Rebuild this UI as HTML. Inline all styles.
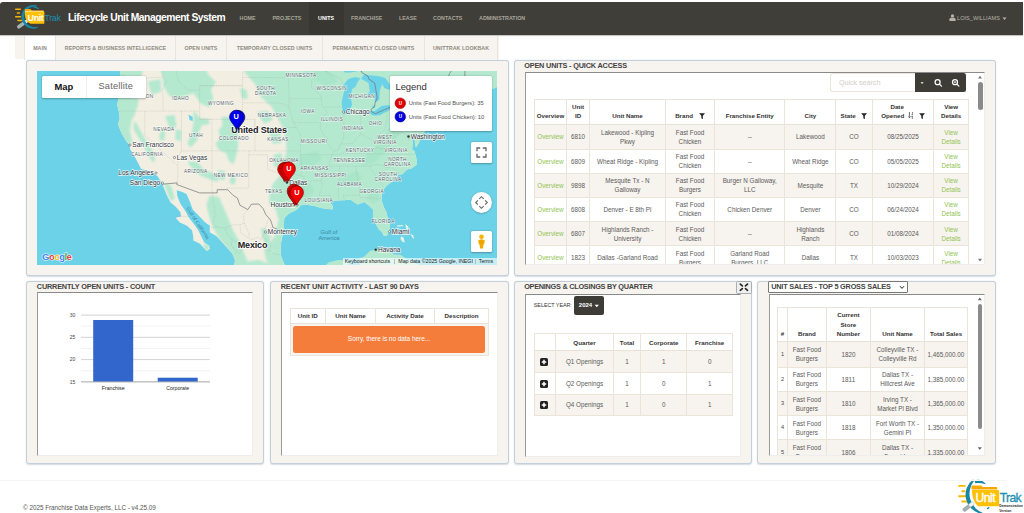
<!DOCTYPE html>
<html><head><meta charset="utf-8">
<style>
*{box-sizing:border-box;margin:0;padding:0}
html,body{width:1024px;height:513px;overflow:hidden;background:#fff;font-family:"Liberation Sans",sans-serif;color:#555}
body{position:relative}
.abs{position:absolute}
#nav{left:0;top:1.6px;width:1022.7px;height:33.8px;background:#3f3e38;border-radius:3px 0 0 0;box-shadow:0 1px 1px rgba(0,0,0,.25)}
#nav .title{left:68px;top:10.4px;font-size:10.3px;font-weight:bold;color:#fff;white-space:nowrap;letter-spacing:-.47px}
#nav .mi{top:13.7px;font-size:5.3px;color:#a9a79c;white-space:nowrap;font-weight:bold;letter-spacing:.05px}
#nav .act{left:309px;top:0;width:35px;height:33.8px;background:#383732}
#tabs{left:15px;top:36px;width:483.5px;height:23px;background:#f7f3ee;border-radius:0 0 0 3px}
.tab{top:36px;height:24px;font-size:5.3px;font-weight:bold;color:#8d8b82;line-height:24px;text-align:center;border-right:1.6px solid #e9e5dd;white-space:nowrap;letter-spacing:.05px}
.tab.on{background:#fff;border-left:1.6px solid #e9e5dd}
.panel{background:#f7f3ee;border:1px solid #c3cfdb;border-radius:3px;box-shadow:0 .5px 1.5px rgba(120,140,160,.3)}
.ptitle{font-size:7.3px;font-weight:bold;color:#444;white-space:nowrap;letter-spacing:-.1px}
.inner{background:#fff;border-top:1px solid #8a8a8a;border-left:1.2px solid #9a9a9a;border-right:1px solid #eee;border-bottom:1px solid #eee;overflow:hidden}
table{border-collapse:collapse;table-layout:fixed;position:absolute;font-size:6.3px;color:#5a5a5a}
td,th{border:1px solid #ebe4d9;text-align:center;vertical-align:middle;padding:0;line-height:9px;overflow:hidden}
th{font-weight:bold;color:#333;vertical-align:bottom;padding-bottom:3.2px;border-bottom:1.5px solid #e9e1d5;font-size:6.2px;line-height:9.1px}
tr.s td{background:#f7f3ee}
.g{color:#92c353}
.mc{background:#fff;border-radius:1.5px;box-shadow:0 .5px 2px rgba(0,0,0,.3)}
.lg{font-size:5.75px;color:#525252;white-space:nowrap;letter-spacing:-.03px}
.at{font-size:5.3px;color:#222;white-space:nowrap;letter-spacing:-.02px}
.fi{display:inline-block;vertical-align:-0.9px;margin-left:5.6px}
</style></head><body>
<!-- NAVBAR -->
<div id="nav" class="abs">
  <div class="act abs"></div>
  <div class="title abs">Lifecycle Unit Management System</div>
  <div class="mi abs" style="left:239.5px">HOME</div>
  <div class="mi abs" style="left:272.5px">PROJECTS</div>
  <div class="mi abs" style="left:318px;color:#fff">UNITS</div>
  <div class="mi abs" style="left:351px">FRANCHISE</div>
  <div class="mi abs" style="left:399px">LEASE</div>
  <div class="mi abs" style="left:433px">CONTACTS</div>
  <div class="mi abs" style="left:479px">ADMINISTRATION</div>
  <div class="mi abs" style="left:957px;font-weight:normal;color:#b5b3a8;font-size:5.55px;top:13.6px">LOIS_WILLIAMS</div>
</div>
<svg class="abs" style="left:14px;top:6px;overflow:visible" width="48" height="24" viewBox="0 0 48 24">
<g stroke="#f7b500" stroke-width="1.5" stroke-linecap="round"><path d="M1.7 3.2H6.3M3.4 6.9H5.4M1.7 10.7H6.5M3.9 14.6H8"/></g>
<path d="M4.8 20.8L12 15.6" stroke="#a4b0b2" stroke-width="3.6" stroke-linecap="round"/>
<path d="M10.3 16.8L12.3 15.3" stroke="#e8eeee" stroke-width="3" stroke-linecap="round"/>
<path d="M22.38 -0.69A11.9 11.9 0 1 0 23.37 21.98L23.65 20.5A10.2 10.2 0 1 1 22.79 0.86Z" fill="#1887a6"/>
<path d="M19.5 .6Q22.5 .3 25.2 2.4L24.6 3.2Q22 1.6 19.5 1.7Z" fill="#1887a6"/>
<path d="M10.9 3.4Q10.9 2.9 11.5 2.9H16.5L18 4.4H29.2Q29.8 4.4 29.8 5V6H10.9Z" fill="#f5a700"/>
<path d="M10.9 5.6H29.6Q30.4 5.6 30.4 6.4V17Q30.4 17.8 29.6 17.8H16.5C13 15.8 11 13 10.9 9Z" fill="#ffc107"/>
<path d="M10.9 5.3H29.5" stroke="#fff3c4" stroke-width=".7"/>
<text x="13.6" y="14.8" style="font:bold 9px 'Liberation Sans',sans-serif;fill:#fff;letter-spacing:-.45px">Unit</text>
<text x="30.6" y="14.8" style="font:8.9px 'Liberation Sans',sans-serif;fill:#1a8fb0;letter-spacing:-.4px">Trak</text>
</svg>
<svg class="abs" style="left:950px;top:474px" width="74" height="39" viewBox="950 474 74 39">
<g stroke="#f9b800" stroke-width="1.9" stroke-linecap="round"><path d="M959.1 485.9H964.8M962.3 491.2H964.5M959.1 496.2H965.2M962.3 501.5H968"/></g>
<path d="M972.9 479.4A19.5 19.5 0 0 0 980 513.5L984.5 513.5A20.5 20.5 0 0 1 974.3 480.6Z" fill="#1887a6"/>
<path d="M974.4 480.4Q981 477.8 986 484.2Q980 482.6 975.4 483.2Z" fill="#1887a6"/>
<ellipse cx="988.2" cy="508.2" rx="1.5" ry=".8" transform="rotate(-35 988.2 508.2)" fill="#1887a6"/>
<path d="M964.6 509.6L972.4 503.6" stroke="#a3aeb0" stroke-width="4" stroke-linecap="round"/>
<path d="M970.6 505L972.6 503.4" stroke="#eef2f2" stroke-width="3.2" stroke-linecap="round"/>
<path d="M971.5 486.2Q971.5 485.4 972.3 485.4H981.2L982.8 487H996.4Q997.2 487 997.2 487.8V489.4H971.5Z" fill="#f5a800"/>
<path d="M971.9 489.9H998.2Q999.2 489.9 999.2 490.9V505.2Q999.2 506.2 998.2 506.2H978C974.2 502.5 972 497 971.9 489.9Z" fill="#ffc107"/>
<text x="975.6" y="501.6" style="font:12.2px 'Liberation Sans',sans-serif;fill:#fff;stroke:#fff;stroke-width:.35px;letter-spacing:-.55px">Unit</text>
<text x="999.8" y="501.6" style="font:12.2px 'Liberation Sans',sans-serif;fill:#1a8fb0;stroke:#1a8fb0;stroke-width:.3px;letter-spacing:-.7px">Trak</text>
<text x="999.3" y="507" style="font:bold 3.3px 'Liberation Sans',sans-serif;fill:#222;letter-spacing:.02px">Demonstration</text>
<text x="999.3" y="511.6" style="font:bold 3.3px 'Liberation Sans',sans-serif;fill:#222;letter-spacing:.02px">Version</text>
</svg>
<svg class="abs" style="left:949px;top:13.5px" width="7" height="7" viewBox="0 0 10 10"><circle cx="5" cy="2.7" r="2.4" fill="#b5b3a8"/><path d="M.6 10V7.6Q.6 5.2 3 5.2H7Q9.4 5.2 9.4 7.6V10Z" fill="#b5b3a8"/></svg>
<svg class="abs" style="left:1002px;top:16.6px" width="5" height="4" viewBox="0 0 5 4"><path d="M.5 .6h4L2.5 3Z" fill="#b5b3a8"/></svg>
<!-- TABS -->
<div id="tabs" class="abs"></div>
<div class="tab on abs" style="left:24px;width:32px">MAIN</div>
<div class="tab abs" style="left:56px;width:120px">REPORTS &amp; BUSINESS INTELLIGENCE</div>
<div class="tab abs" style="left:176px;width:51px">OPEN UNITS</div>
<div class="tab abs" style="left:227px;width:96px">TEMPORARY CLOSED UNITS</div>
<div class="tab abs" style="left:323px;width:102px">PERMANENTLY CLOSED UNITS</div>
<div class="tab abs" style="left:425px;width:73px">UNITTRAK LOOKBAK</div>

<!-- PANELS -->
<div class="panel abs" id="p-map" style="left:26px;top:60px;width:483px;height:216.2px"></div>
<!--MAP--><svg class="abs" style="left:37px;top:71px" width="460" height="194" viewBox="0 0 460 194">
<defs><clipPath id="lc"><path d="M79 -15.7 L82.7 -2 L83.3 4.2 L83.3 14.7 L82.7 23.3 L80.2 33.5 L82.1 41.8 L82.7 48.3 L80.9 53.2 L84.5 61.9 L89.4 70.6 L92.5 73.7 L93.1 78.3 L96.2 82.9 L99.9 89.8 L104.2 98 L110.9 99.5 L117 102.5 L120.7 105.4 L125 112 L126.8 117.1 L130.5 125.7 L133.6 131.4 L138.5 135.6 L143.4 141.2 L144 145.4 L138.5 146.8 L142.8 151.6 L149.5 154.4 L155 159.2 L156.3 166 L156.3 169.4 L163 172.7 L167.3 177.4 L169.8 180.1 L172.8 178.1 L172.2 174.7 L167.3 171.4 L164.9 166.7 L161.2 159.2 L156.9 153 L152 146.8 L147.7 139.1 L143.4 132.8 L140.3 125 L139.7 119.3 L144.6 120.7 L149.5 122.9 L153.2 131.4 L155.7 138.4 L163 146.1 L169.1 152.3 L172.8 154.4 L172.8 161.2 L179.6 165.3 L183.9 170 L191.2 178.1 L195.5 182.7 L198 189.3 L197.3 193.9 L195.5 199.2 L199.8 205.7 L255 205.7 L254.4 204.4 L249.5 197.2 L247 192.6 L243.9 184.7 L243.9 180.7 L243.9 172.7 L245.2 166 L247.6 159.9 L246.4 153.7 L247.6 146.8 L251.9 142.6 L259.3 139.1 L262.3 136.3 L263.6 134.2 L268.5 133.5 L277.7 134.9 L283.8 137 L289.9 137.7 L295.4 138.4 L296.1 135.6 L293.6 132.1 L294.8 130 L304 129.3 L307.1 129.3 L313.2 128.6 L320.6 133.5 L327.3 131 L331.6 134.2 L335.9 138.4 L336.5 143.3 L335.9 146.8 L339.6 154.4 L342 158.5 L345.1 161.2 L346.9 165 L350 164.6 L352.2 160.5 L352.8 153.7 L350 144 L349.4 141.2 L346.9 136.3 L344.5 129.3 L345.1 122.1 L347.6 117.1 L351.2 113.5 L357.4 109.1 L361.7 103.6 L365.3 103.2 L370.2 98.4 L374.5 97.6 L380.1 93.5 L379.4 87.5 L377.6 80.6 L375.1 78.3 L375.8 72.1 L374.5 65.1 L376.4 61.9 L377.6 67.5 L378.2 75.2 L379.4 76 L382.5 70.6 L383.1 66.7 L380.7 61.9 L384.3 64.3 L388 60.3 L389.9 53.2 L392.9 51.5 L402.1 48.3 L405.2 45.9 L410.7 43.4 L414.4 42.6 L413.2 39.7 L408.9 37.6 L410.1 31 L413.2 26.7 L420.5 23.3 L429.7 19.1 L433.4 15.6 L438.9 13 L446.3 9.5 L448.7 12.1 L440.1 19.1 L438.3 25 L442 27.6 L449.9 19.9 L457.3 17.3 L468.3 12.1 L472.6 3.3 L475.7 -12Z"/>
</clipPath><filter id="bl" x="-5%" y="-5%" width="110%" height="110%"><feGaussianBlur stdDeviation="0.9"/></filter></defs>
<rect width="460" height="194" fill="#6cd2e8"/>
<path d="M79 -15.7 L82.7 -2 L83.3 4.2 L83.3 14.7 L82.7 23.3 L80.2 33.5 L82.1 41.8 L82.7 48.3 L80.9 53.2 L84.5 61.9 L89.4 70.6 L92.5 73.7 L93.1 78.3 L96.2 82.9 L99.9 89.8 L104.2 98 L110.9 99.5 L117 102.5 L120.7 105.4 L125 112 L126.8 117.1 L130.5 125.7 L133.6 131.4 L138.5 135.6 L143.4 141.2 L144 145.4 L138.5 146.8 L142.8 151.6 L149.5 154.4 L155 159.2 L156.3 166 L156.3 169.4 L163 172.7 L167.3 177.4 L169.8 180.1 L172.8 178.1 L172.2 174.7 L167.3 171.4 L164.9 166.7 L161.2 159.2 L156.9 153 L152 146.8 L147.7 139.1 L143.4 132.8 L140.3 125 L139.7 119.3 L144.6 120.7 L149.5 122.9 L153.2 131.4 L155.7 138.4 L163 146.1 L169.1 152.3 L172.8 154.4 L172.8 161.2 L179.6 165.3 L183.9 170 L191.2 178.1 L195.5 182.7 L198 189.3 L197.3 193.9 L195.5 199.2 L199.8 205.7 L255 205.7 L254.4 204.4 L249.5 197.2 L247 192.6 L243.9 184.7 L243.9 180.7 L243.9 172.7 L245.2 166 L247.6 159.9 L246.4 153.7 L247.6 146.8 L251.9 142.6 L259.3 139.1 L262.3 136.3 L263.6 134.2 L268.5 133.5 L277.7 134.9 L283.8 137 L289.9 137.7 L295.4 138.4 L296.1 135.6 L293.6 132.1 L294.8 130 L304 129.3 L307.1 129.3 L313.2 128.6 L320.6 133.5 L327.3 131 L331.6 134.2 L335.9 138.4 L336.5 143.3 L335.9 146.8 L339.6 154.4 L342 158.5 L345.1 161.2 L346.9 165 L350 164.6 L352.2 160.5 L352.8 153.7 L350 144 L349.4 141.2 L346.9 136.3 L344.5 129.3 L345.1 122.1 L347.6 117.1 L351.2 113.5 L357.4 109.1 L361.7 103.6 L365.3 103.2 L370.2 98.4 L374.5 97.6 L380.1 93.5 L379.4 87.5 L377.6 80.6 L375.1 78.3 L375.8 72.1 L374.5 65.1 L376.4 61.9 L377.6 67.5 L378.2 75.2 L379.4 76 L382.5 70.6 L383.1 66.7 L380.7 61.9 L384.3 64.3 L388 60.3 L389.9 53.2 L392.9 51.5 L402.1 48.3 L405.2 45.9 L410.7 43.4 L414.4 42.6 L413.2 39.7 L408.9 37.6 L410.1 31 L413.2 26.7 L420.5 23.3 L429.7 19.1 L433.4 15.6 L438.9 13 L446.3 9.5 L448.7 12.1 L440.1 19.1 L438.3 25 L442 27.6 L449.9 19.9 L457.3 17.3 L468.3 12.1 L472.6 3.3 L475.7 -12Z" fill="#f3eee2"/>
<path d="M322.7 187 L326.7 186 L332.8 180.1 L338.4 178.4 L345.7 178.4 L351.2 179.7 L357.4 183.4 L363.5 183.7 L369.6 188 L377.6 191.6 L383.7 194.6 L388.6 197.5 L388 205.7 L322.4 205.7Z" fill="#b4e9d0"/>
<path d="M289.3 205.7 L289 193.9 L291.8 191.3 L301 189 L308.9 189.3 L311.4 191.3 L310.2 205.7Z" fill="#b4e9d0"/>
<path d="M56.3 -38.4 L77.2 -30.7 L87 -14.7 L79 -16.6Z" fill="#b4e9d0"/>
<path d="M389.9 51.5 L392.9 51.5 L402.1 48.3 L398.4 48.7 L391.7 49.5Z" fill="#b4e9d0"/>
<path d="M364.1 165.3 L366.6 166.7 L367.8 171.4 L365.3 170.7 L363.5 168Z" fill="#e9f3e4"/>
<path d="M359.8 154.4 L365.3 154.1 L366.6 155.1 L360.4 155.8Z" fill="#e9f3e4"/>
<path d="M368.4 153 L371.5 155.8 L370.2 159.2 L369 157.1Z" fill="#e9f3e4"/>
<path d="M373.3 162.6 L376.4 164.6 L377 168 L375.5 166.7Z" fill="#e9f3e4"/>
<g clip-path="url(#lc)" filter="url(#bl)">
<path d="M202.9 -21.2 L209 1.6 L219.4 13 L224.3 25 L235.4 35.1 L241.5 46.7 L247 56.4 L249.5 68.2 L250.7 79.9 L247 91.3 L246.4 102.5 L236.6 113.5 L233.5 124.3 L232.9 131.4 L239.7 138.4 L242.7 148.9 L240.3 157.8 L238.4 166 L235.4 172.7 L236.6 179.4 L234.7 186 L238.4 192.6 L240.9 205.7 L267.2 205.7 L267.2 172.7 L365.3 172.7 L475.7 56.4 L488 -21.2Z" fill="#b4e9d0" stroke="#b4e9d0" stroke-width="2" stroke-linejoin="round"/>
<path d="M77.2 -21.2 L77.2 44.2 L79.6 54.8 L83.9 65.9 L89.4 72.9 L94.3 70.6 L91.9 59.6 L93.7 49.1 L96.8 43.4 L100.5 31.8 L99.9 19.1 L102.9 6 L106.6 -5.6 L110.9 -21.2Z" fill="#b4e9d0" stroke="#b4e9d0" stroke-width="2" stroke-linejoin="round"/>
<path d="M98 51.5 L102.3 59.6 L107.2 68.2 L112.7 76.8 L117 86 L116.4 90.5 L112.7 84.5 L107.8 75.2 L102.3 65.9 L97.4 58Z" fill="#b4e9d0" stroke="#b4e9d0" stroke-width="2" stroke-linejoin="round"/>
<path d="M117 -21.2 L120.1 -7.4 L126.2 3.3 L127.5 14.7 L132.4 23.3 L139.7 27.6 L147.7 24.2 L156.9 20.8 L164.2 31.8 L172.2 35.1 L175.3 27.6 L172.8 18.2 L177.7 11.3 L170.4 4.2 L167.3 -4.7 L156.9 -10.2 L152 -21.2Z" fill="#b4e9d0" stroke="#b4e9d0" stroke-width="2" stroke-linejoin="round"/>
<path d="M157.5 41.8 L163 48.3 L170.4 49.1 L171.6 52.3 L164.2 53.2 L161.2 60.3 L158.7 69.8 L153.8 75.2 L151.4 72.1 L155.7 62.7 L157.5 52.3Z" fill="#b4e9d0" stroke="#b4e9d0" stroke-width="2" stroke-linejoin="round"/>
<path d="M185.7 46.7 L192.4 46.7 L198 52.3 L199.8 60.3 L200.4 69 L199.8 78.3 L197.3 87.5 L196.1 92 L192.4 89 L190 81.4 L182.6 78.3 L179.6 72.9 L183.9 67.5 L182.6 59.6 L186.3 54.8Z" fill="#b4e9d0" stroke="#b4e9d0" stroke-width="2" stroke-linejoin="round"/>
<path d="M152 91.3 L160 92 L166.1 99.5 L174.1 102.5 L179.6 105.4 L180.2 109.8 L173.4 107.6 L164.2 103.9 L156.9 98Z" fill="#b4e9d0" stroke="#b4e9d0" stroke-width="2" stroke-linejoin="round"/>
<path d="M221.3 41.8 L230.5 40.9 L234.7 48.3 L227.4 51.5Z" fill="#b4e9d0" stroke="#b4e9d0" stroke-width="2" stroke-linejoin="round"/>
<path d="M233.5 62.7 L241.5 61.1 L243.9 70.6 L236.6 72.1Z" fill="#b4e9d0" stroke="#b4e9d0" stroke-width="2" stroke-linejoin="round"/>
<path d="M237.8 84.5 L243.9 82.9 L243.3 93.5 L237.8 95Z" fill="#b4e9d0" stroke="#b4e9d0" stroke-width="2" stroke-linejoin="round"/>
<path d="M129.3 45.9 L136.7 45 L138.5 54.8 L133.6 57.2Z" fill="#b4e9d0" stroke="#b4e9d0" stroke-width="2" stroke-linejoin="round"/>
<path d="M139.7 59.6 L143.4 60.3 L142.8 69 L139.1 67.5Z" fill="#b4e9d0" stroke="#b4e9d0" stroke-width="2" stroke-linejoin="round"/>
<path d="M124.4 60.3 L127.5 61.1 L126.2 69 L123.2 67.5Z" fill="#b4e9d0" stroke="#b4e9d0" stroke-width="2" stroke-linejoin="round"/>
<path d="M182 100.2 L187.5 101 L186.3 108.4 L182 106.9Z" fill="#b4e9d0" stroke="#b4e9d0" stroke-width="2" stroke-linejoin="round"/>
<path d="M194.3 105.4 L198 106.2 L196.7 112.7 L193.7 111.3Z" fill="#b4e9d0" stroke="#b4e9d0" stroke-width="2" stroke-linejoin="round"/>
<path d="M86.4 32.6 L95.6 30.1 L96.8 38.5 L87.6 40.9Z" fill="#b4e9d0" stroke="#b4e9d0" stroke-width="2" stroke-linejoin="round"/>
<path d="M112.1 11.3 L122.6 9.5 L123.2 19.9 L115.2 22.5Z" fill="#b4e9d0" stroke="#b4e9d0" stroke-width="2" stroke-linejoin="round"/>
<path d="M204.1 18.2 L209 19.9 L209.6 26.7 L205.9 26.7Z" fill="#b4e9d0" stroke="#b4e9d0" stroke-width="2" stroke-linejoin="round"/>
<path d="M173.4 125.7 L181.4 127.1 L186.3 138.4 L191.2 149.6 L195.5 160.5 L201 170 L204.7 179.4 L208.4 187.4 L212.1 195.9 L215.1 205.7 L198.6 205.7 L197.3 195.3 L198 188.7 L194.9 181.4 L190.6 176.1 L184.5 169.4 L180.2 161.9 L176.5 155.1 L174.1 148.2 L171.6 139.8 L170.4 132.8Z" fill="#b4e9d0" stroke="#b4e9d0" stroke-width="2" stroke-linejoin="round"/>
<path d="M212.1 191.3 L221.3 190 L230.5 193.3 L236.6 191.3 L239 205.7 L212.1 205.7Z" fill="#b4e9d0" stroke="#b4e9d0" stroke-width="2" stroke-linejoin="round"/>
<path d="M224.9 157.8 L229.8 159.9 L232.3 167.3 L234.1 175.4 L233.5 183.4 L235.4 191.3 L230.5 190 L228.6 182.1 L228.6 174.1 L226.8 166Z" fill="#b4e9d0" stroke="#b4e9d0" stroke-width="2" stroke-linejoin="round"/>
<path d="M128.7 114.2 L133 114.9 L135.4 122.9 L136.7 127.1 L134.2 128.6 L131.7 122.9Z" fill="#b4e9d0" stroke="#b4e9d0" stroke-width="2" stroke-linejoin="round"/>
<path d="M167.9 173.4 L171 174.7 L170.4 178.7 L168.5 178.1Z" fill="#b4e9d0" stroke="#b4e9d0" stroke-width="2" stroke-linejoin="round"/>
<path d="M325.5 95 L334.7 93.5 L343.9 85.2 L351.9 76 L359.2 67.5 L365.3 58.8 L368.4 51.5 L362.3 46.7 L353.1 56.4 L343.9 68.2 L335.9 78.3 L327.3 86Z" fill="#a6e3c7" opacity=".8"/>
<path d="M264.2 83.7 L279.5 79.9 L285.6 87.5 L276.4 95 L264.2 98.8 L261.1 91.3Z" fill="#a6e3c7" opacity=".8"/>
<path d="M261.1 -7.4 L279.5 -7.4 L294.8 1.6 L301 10.4 L288.7 14.7 L273.4 6Z" fill="#a6e3c7" opacity=".8"/>
<path d="M310.2 103.9 L319.4 99.5 L325.5 106.2 L319.4 113.5 L307.1 115.6 L301 109.8Z" fill="#a6e3c7" opacity=".8"/>
<path d="M264.2 113.5 L273.4 111.3 L277.7 120.7 L270.3 127.1 L262.3 124.3Z" fill="#a6e3c7" opacity=".8"/>
<path d="M331.6 120.7 L340.8 118.5 L343.3 127.1 L337.1 132.8 L329.8 128.6Z" fill="#a6e3c7" opacity=".8"/>
</g>
<path d="M307.1 42.6 L310.2 43 L312.6 40.1 L315.1 33.5 L313.5 25 L315.1 18.2 L318.7 15.6 L320 12.1 L322.4 8.6 L323.6 7.3 L318.7 6 L314.5 6.9 L310.8 8.6 L306.5 13.9 L304 18.6 L307.7 15.6 L307.1 20.8 L305.9 25 L304.6 31.8 L305.3 37.6 L306.5 41.3Z" fill="#6cd2e8"/>
<path d="M278.9 -0.7 L285.6 -6.5 L294.8 -12 L302.8 -20.3 L313.2 -18.4 L322.4 -11.1 L324.9 -2 L325.5 1.6 L322.4 -0.2 L313.2 1.6 L307.7 1.6 L304 -2.9 L305.3 -7 L300.4 -4.7 L294.8 -1.1 L288.7 0.7 L285.6 -2Z" fill="#6cd2e8"/>
<path d="M324 7.8 L331.6 12.1 L332.8 19.9 L329.2 25.9 L332.8 23.8 L336.5 23.3 L338.4 31.8 L342.3 28.4 L342.7 19.9 L345.1 13 L347.6 17.3 L353.1 19.1 L353.7 14.7 L348.2 6.9 L340.8 5.1 L331.6 4.2 L327.3 3.3Z" fill="#6cd2e8"/>
<path d="M331.6 42.6 L336.5 44.6 L342.7 44.2 L352.5 38.9 L359.8 33.1 L351.9 33.9 L344.5 35.1 L337.7 40.1 L334.1 39.7Z" fill="#6cd2e8"/>
<path d="M354.3 29.3 L365.3 28.9 L373.9 27.6 L376.4 22.5 L368.4 23.3 L359.2 24.2Z" fill="#6cd2e8"/>
<path d="M335.3 37.6 L338.4 36.8 L337.7 34.3 L335.6 35.1Z" fill="#6cd2e8"/>
<path d="M151.4 43.4 L155.7 45.9 L155.7 49.9 L152.6 49.1Z" fill="#6cd2e8"/>
<g fill="none" stroke="#9fa8a0" stroke-width=".45" stroke-dasharray="1 .8" opacity=".75">
<path d="M82.1 40.1 L107.8 40.1 L126 40.1 L144.4 40.1 L162.7 40.1"/>
<path d="M107.8 40.1 L107.8 64.3 L140.8 95 L141.1 102.5 L140.2 111.9"/>
<path d="M126 -21.2 L126 2.5 L126.8 6.9 L129.3 10.4 L125 19.9 L126 23.3 L126 40.1"/>
<path d="M83.3 3.8 L88.2 4.7 L90.7 9.1 L100.5 9.1 L114 6.6 L126 6"/>
<path d="M144.4 40.1 L144.4 79.9 L140.9 86.7 L140.8 95"/>
<path d="M162.7 19.1 L162.7 48.3 L175 48.3 L175 79.9 L175 121.9"/>
<path d="M144.4 79.9 L175 79.9 L212.1 79.9 L217.9 79.9 L263.4 79.9 L263.4 83.7 L290.5 83.7 L294.8 83.7"/>
<path d="M162.7 14.7 L205.6 14.7 L205.6 48.3 L217.9 48.3 L217.9 56.4 L259.3 56.4"/>
<path d="M132.1 -21.2 L132.1 -12 L138.5 -2.9 L141.6 10.4 L150.8 19.1 L162.7 19.1 L162.7 14.7 L205.6 14.7 L205.6 -21.2"/>
<path d="M162.7 48.3 L205.6 48.3"/>
<path d="M217.9 48.3 L217.9 79.9"/>
<path d="M205.6 6.4 L251.5 6.6 L252.2 27.6 L251.9 36 L247.6 33.1 L239.7 31.9 L205.6 31.8"/>
<path d="M252.2 27.6 L284.3 27.6"/>
<path d="M251.9 36 L255.6 48.3 L256.2 51.5 L259.3 56.4 L263.4 63.5 L263.4 79.9"/>
<path d="M256.2 51.7 L281.3 51.5 L283.2 53.2"/>
<path d="M212.1 79.9 L212.1 83.7 L230.5 83.7 L230.5 98.3 L235.4 100.2 L242.7 102.5 L248.9 103.9 L258 103.4 L264.3 105.1 L267 105.8 L267 109.8 L267 124.3 L269.1 130.7 L268.2 133.5"/>
<path d="M211.7 83.7 L211.7 117.1 L190 117.1 L190.6 118.7"/>
<path d="M263.4 83.7 L264.6 92 L264.3 105.1"/>
<path d="M267 109.8 L284.6 109.8 L285 117.1 L282 124.3 L293.4 124.3 L293 127.1 L294.2 130"/>
<path d="M284.3 27.6 L285 34.3 L290.5 41.8 L285 46.7 L283.2 53.2 L283.2 57.2 L287.5 65.1 L290.5 66.7 L289.9 72.1 L294.8 77.6 L297.3 79.9 L294.8 83.7 L291.8 95 L286.2 102.5 L284.6 109.8"/>
<path d="M278.9 -0.7 L277.7 5.1 L274.6 9.5 L274.6 16.5 L283.8 24.2 L284.3 27.6"/>
<path d="M287.8 36 L305.3 36"/>
<path d="M289.3 1.1 L297.3 5.1 L303.4 6.9 L306.5 13.9"/>
<path d="M306.9 42.6 L306.9 61.9 L306.5 66.7 L304 72.9 L301 79.1 L297.3 79.9"/>
<path d="M306.9 42.1 L323.6 42.1 L331.9 42.3"/>
<path d="M323.6 42.6 L323.6 63.5 L326.1 63.9 L330.4 67.1 L337.1 69 L339.6 67.5 L342.7 62.7 L347.6 58.8 L349.9 51.5 L349.9 37.6"/>
<path d="M304 72.9 L310.2 72.9 L316.3 72.1 L320 66.7 L323.6 63.5"/>
<path d="M294.8 83.7 L303.7 83.7 L303.7 82.3 L330.5 82.9 L342.8 83 L378.2 83.3"/>
<path d="M289.9 95 L302.8 95 L318.7 95.2 L326.7 95.1 L334.1 95 L338.4 93.5 L346.9 94.3 L348.2 96.5 L354.9 96.5 L362 103.4"/>
<path d="M302.8 95 L301.3 117.8 L301.6 128.6"/>
<path d="M318.7 95.2 L321.2 110.6 L322.4 117.1 L322.4 124.3 L306.5 124.3 L307.1 129.3"/>
<path d="M322.4 124.3 L323.3 126.4 L339.6 127.4 L340.8 128.6 L344.2 126.4"/>
<path d="M334.1 95 L332.5 97.3 L336.5 101.7 L341.4 107.6 L346.3 116.4"/>
<path d="M330.5 82.9 L337.1 77.6 L340.8 76 L342.7 78.3 L351.2 76 L355.5 68.2 L362.9 62.7 L367.1 61.8 L368.4 63.5 L370.9 65.1 L372.1 70.6"/>
<path d="M349.9 58.6 L378.8 58.6 L378.9 62.7 L379.4 68.6 L383.4 68.6"/>
<path d="M356.3 58.6 L356.3 62.7 L362.9 62.7"/>
<path d="M349.9 40.1 L354.5 40.1 L354.5 37.9"/>
<path d="M354.5 40.1 L381.6 40.1 L385.6 45.4 L383.1 49.1 L382.5 51.5 L385.6 55.2 L381.3 58"/>
<path d="M138.5 145.4 L152 145.4"/>
<path d="M175.3 121.9 L176.5 131.4 L178.3 143.3 L175.9 152.3 L179 155.8 L173.4 157.1"/>
<path d="M179 155.8 L187.5 157.1 L190.6 163.9 L194.9 168.7 L194.3 174.7 L199.8 180.7 L197.3 182.7"/>
<path d="M187.5 157.1 L196.7 153.7 L202.9 153.7 L207.2 152.3 L206.5 144 L210.8 138.6"/>
<path d="M207.2 152.3 L212.1 162.6 L212.1 167.3 L215.1 168.7 L221.3 166 L224.3 168.7 L225.6 163.9 L228.6 155.8 L231.7 147.5 L233.5 148.9"/>
<path d="M225.6 163.9 L229.2 169.4 L227.4 177.4 L230.5 180.7 L233.5 179.4 L233.5 174.1 L236.6 168.7 L232.3 163.3 L234.1 156.5 L236 156.5"/>
<path d="M233.5 179.4 L237.2 183.4 L242.7 183.4 L243.9 184.7"/>
<path d="M202.9 153.7 L204.1 162.6 L212.1 167.3"/>
<path d="M194.9 168.7 L202.9 172.7 L205.9 178.1 L202.9 182.7 L199.8 180.7"/>
</g>
<g fill="none" stroke="#6d7474" stroke-width=".7">
<path d="M125.5 113.2 L140.2 111.9 L139.7 113.5 L162.6 121.9 L180.2 121.9 L180.2 118.7 L190.6 118.7 L196.1 124.3 L200.4 127.1 L202.9 134.2 L210.8 138.6 L214.5 133.2 L221.9 133 L226.2 137.7 L228.6 143.3 L233.5 148.9 L236 156.5 L241.5 158.8 L247.9 159.5"/>
<path d="M324.9 1.6 L331 5.1 L331.6 7.8 L337.7 12.1 L340.2 26.7 L338.1 31.8 L337.7 35.1 L334.1 38.5 L334.1 40.5 L338.4 42.7 L350 37.6 L359.5 33.1 L358.9 29.7 L358 28 L372.7 26.5 L375.8 21.6 L381.9 16 L385.6 14.7 L405.2 14.7 L409.5 11.3 L412.5 2.5 L419.3 -7 L427.9 -3.8 L427.9 8.6 L432.2 13.9"/>
<path d="M278.9 -0.7 L294.2 -12 L301.6 -14.7 L323.3 -2 L324.9 1.6"/>
</g>
<style>.st{font:4.65px "Liberation Sans",sans-serif;fill:#4f5b66;letter-spacing:.42px;paint-order:stroke;stroke:#fff;stroke-opacity:.8;stroke-width:.9px}.ct{font:6.5px "Liberation Sans",sans-serif;fill:#2e3338;paint-order:stroke;stroke:#fff;stroke-opacity:.85;stroke-width:1.3px;letter-spacing:0}.cn{font:bold 9px "Liberation Sans",sans-serif;fill:#222;paint-order:stroke;stroke:#fff;stroke-opacity:.85;stroke-width:1.6px;letter-spacing:-.15px}.wt{font:5.7px "Liberation Sans",sans-serif;fill:#3a87a3}</style>
<text x="105" y="27.3" class="st" text-anchor="middle" >OREGON</text>
<text x="143.75" y="28.6" class="st" text-anchor="middle" >IDAHO</text>
<text x="184" y="33.6" class="st" text-anchor="middle" >WYOMING</text>
<text x="228.75" y="18.6" class="st" text-anchor="middle" >SOUTH</text>
<text x="228.75" y="23.6" class="st" text-anchor="middle" >DAKOTA</text>
<text x="235" y="45.6" class="st" text-anchor="middle" >NEBRASKA</text>
<text x="127" y="60.1" class="st" text-anchor="middle" >NEVADA</text>
<text x="159" y="65.6" class="st" text-anchor="middle" >UTAH</text>
<text x="197" y="68.6" class="st" text-anchor="middle" >COLORADO</text>
<text x="241" y="70.1" class="st" text-anchor="middle" >KANSAS</text>
<text x="110" y="85.1" class="st" text-anchor="middle" >CALIFORNIA</text>
<text x="158.75" y="101.6" class="st" text-anchor="middle" >ARIZONA</text>
<text x="194" y="106.1" class="st" text-anchor="middle" >NEW MEXICO</text>
<text x="247" y="91.3" class="st" text-anchor="middle" >OKLAHOMA</text>
<text x="236.75" y="122.3" class="st" text-anchor="middle" >TEXAS</text>
<text x="264" y="6.1" class="st" text-anchor="middle" >MINNESOTA</text>
<text x="294.75" y="18.6" class="st" text-anchor="middle" >WISCONSIN</text>
<text x="324.75" y="27.1" class="st" text-anchor="middle" >MICHIGAN</text>
<text x="270.75" y="42.1" class="st" text-anchor="middle" >IOWA</text>
<text x="295" y="50.1" class="st" text-anchor="middle" >ILLINOIS</text>
<text x="338.5" y="53.6" class="st" text-anchor="middle" >OHIO</text>
<text x="316" y="59.3" class="st" text-anchor="middle" >INDIANA</text>
<text x="277" y="71.6" class="st" text-anchor="middle" >MISSOURI</text>
<text x="348" y="68.1" class="st" text-anchor="middle" >WEST</text>
<text x="348" y="73.1" class="st" text-anchor="middle" >VIRGINIA</text>
<text x="323" y="80.6" class="st" text-anchor="middle" >KENTUCKY</text>
<text x="359" y="80.6" class="st" text-anchor="middle" >VIRGINIA</text>
<text x="312.5" y="91.3" class="st" text-anchor="middle" >TENNESSEE</text>
<text x="360.5" y="90.1" class="st" text-anchor="middle" >NORTH</text>
<text x="360.5" y="95.1" class="st" text-anchor="middle" >CAROLINA</text>
<text x="277.5" y="98.8" class="st" text-anchor="middle" >ARKANSAS</text>
<text x="293.5" y="106.3" class="st" text-anchor="middle" >MISSISSIPPI</text>
<text x="351" y="104.8" class="st" text-anchor="middle" >SOUTH</text>
<text x="351" y="109.8" class="st" text-anchor="middle" >CAROLINA</text>
<text x="312.5" y="114.8" class="st" text-anchor="middle" >ALABAMA</text>
<text x="334.75" y="121.8" class="st" text-anchor="middle" >GEORGIA</text>
<text x="281.75" y="130.6" class="st" text-anchor="middle" >LOUISIANA</text>
<text x="346.25" y="151.8" class="st" text-anchor="middle" >FLORIDA</text>
<circle cx="93" cy="74" r="1.1" fill="#fff" stroke="#444" stroke-width=".5"/>
<text x="95.3" y="76.1" class="ct" text-anchor="start" >San Francisco</text>
<circle cx="137.5" cy="86.5" r="1.1" fill="#fff" stroke="#444" stroke-width=".5"/>
<text x="139.8" y="88.6" class="ct" text-anchor="start" >Las Vegas</text>
<circle cx="119" cy="102" r="1.1" fill="#fff" stroke="#444" stroke-width=".5"/>
<text x="116.7" y="104.1" class="ct" text-anchor="end" >Los Angeles</text>
<circle cx="125.5" cy="112" r="1.1" fill="#fff" stroke="#444" stroke-width=".5"/>
<text x="123.2" y="114.1" class="ct" text-anchor="end" >San Diego</text>
<circle cx="306.5" cy="41" r="1.1" fill="#fff" stroke="#444" stroke-width=".5"/>
<text x="308.8" y="43.1" class="ct" text-anchor="start" >Chicago</text>
<circle cx="371.5" cy="65.5" r="1.1" fill="#333" stroke="#444" stroke-width=".5"/>
<text x="373.8" y="67.6" class="ct" text-anchor="start" >Washington</text>
<circle cx="250" cy="111.5" r="1.1" fill="#333" stroke="#444" stroke-width=".5"/>
<text x="252.3" y="113.6" class="ct" text-anchor="start" >Dallas</text>
<circle cx="260" cy="134" r="1.1" fill="#fff" stroke="#444" stroke-width=".5"/>
<text x="257.7" y="136.1" class="ct" text-anchor="end" >Houston</text>
<circle cx="228.5" cy="161" r="1.1" fill="#fff" stroke="#444" stroke-width=".5"/>
<text x="230.8" y="163.1" class="ct" text-anchor="start" >Monterrey</text>
<circle cx="352.5" cy="160.75" r="1.1" fill="#fff" stroke="#444" stroke-width=".5"/>
<text x="354.8" y="162.85" class="ct" text-anchor="start" >Miami</text>
<circle cx="338.75" cy="178.75" r="1.1" fill="#333" stroke="#444" stroke-width=".5"/>
<text x="341.05" y="180.85" class="ct" text-anchor="start" >Havana</text>
<text x="222" y="61.6" class="cn" text-anchor="middle" >United States</text>
<text x="215.5" y="176.6" class="cn" text-anchor="middle" >Mexico</text>
<text x="292" y="162.6" class="wt" text-anchor="middle" >Gulf of</text>
<text x="292" y="168.6" class="wt" text-anchor="middle" >America</text>
<text class="wt" style="font-size:5px" text-anchor="middle" transform="translate(159.5 153) rotate(56)">Gulf of California</text>
<g transform="translate(201.2 46)"><path d="M0 12.6C-1.2 8.2 -6.6 5.2 -6.6 0A6.6 6.6 0 1 1 6.6 0C6.6 5.2 1.2 8.2 0 12.6Z" fill="#0000f0" stroke="#00003a" stroke-width=".7"/><text y="2.6" text-anchor="middle" style="font:bold 7.4px 'Liberation Sans',sans-serif;fill:#fff">U</text></g>
<g transform="translate(199.2 45.8)"><path d="M0 12.6C-1.2 8.2 -6.6 5.2 -6.6 0A6.6 6.6 0 1 1 6.6 0C6.6 5.2 1.2 8.2 0 12.6Z" fill="#0000f0" stroke="#00006a" stroke-width=".7"/><text y="2.6" text-anchor="middle" style="font:bold 7.4px 'Liberation Sans',sans-serif;fill:#fff">U</text></g>
<g transform="translate(247.3 98)"><path d="M0 12.6C-1.2 8.2 -6.6 5.2 -6.6 0A6.6 6.6 0 1 1 6.6 0C6.6 5.2 1.2 8.2 0 12.6Z" fill="#f40000" stroke="#7a0000" stroke-width=".7"/><text y="2.6" text-anchor="middle" style="font:bold 7.4px 'Liberation Sans',sans-serif;fill:#fff">U</text></g>
<g transform="translate(248.8 98)"><path d="M0 12.6C-1.2 8.2 -6.6 5.2 -6.6 0A6.6 6.6 0 1 1 6.6 0C6.6 5.2 1.2 8.2 0 12.6Z" fill="#f40000" stroke="#7a0000" stroke-width=".7"/><text y="2.6" text-anchor="middle" style="font:bold 7.4px 'Liberation Sans',sans-serif;fill:#fff">U</text></g>
<g transform="translate(250.3 98)"><path d="M0 12.6C-1.2 8.2 -6.6 5.2 -6.6 0A6.6 6.6 0 1 1 6.6 0C6.6 5.2 1.2 8.2 0 12.6Z" fill="#f40000" stroke="#7a0000" stroke-width=".7"/><text y="2.6" text-anchor="middle" style="font:bold 7.4px 'Liberation Sans',sans-serif;fill:#fff">U</text></g>
<g transform="translate(251.8 97.6)"><path d="M0 12.6C-1.2 8.2 -6.6 5.2 -6.6 0A6.6 6.6 0 1 1 6.6 0C6.6 5.2 1.2 8.2 0 12.6Z" fill="#f40000" stroke="#7a0000" stroke-width=".7"/><text y="2.6" text-anchor="middle" style="font:bold 7.4px 'Liberation Sans',sans-serif;fill:#fff">U</text></g>
<g transform="translate(256.8 119.9)"><path d="M0 12.6C-1.2 8.2 -6.6 5.2 -6.6 0A6.6 6.6 0 1 1 6.6 0C6.6 5.2 1.2 8.2 0 12.6Z" fill="#f40000" stroke="#7a0000" stroke-width=".7"/><text y="2.6" text-anchor="middle" style="font:bold 7.4px 'Liberation Sans',sans-serif;fill:#fff">U</text></g>
<g transform="translate(257.8 121.9)"><path d="M0 12.6C-1.2 8.2 -6.6 5.2 -6.6 0A6.6 6.6 0 1 1 6.6 0C6.6 5.2 1.2 8.2 0 12.6Z" fill="#f40000" stroke="#7a0000" stroke-width=".7"/><text y="2.6" text-anchor="middle" style="font:bold 7.4px 'Liberation Sans',sans-serif;fill:#fff">U</text></g>
<g transform="translate(258.8 120.9)"><path d="M0 12.6C-1.2 8.2 -6.6 5.2 -6.6 0A6.6 6.6 0 1 1 6.6 0C6.6 5.2 1.2 8.2 0 12.6Z" fill="#f40000" stroke="#7a0000" stroke-width=".7"/><text y="2.6" text-anchor="middle" style="font:bold 7.4px 'Liberation Sans',sans-serif;fill:#fff">U</text></g>
<g transform="translate(259.8 121.4)"><path d="M0 12.6C-1.2 8.2 -6.6 5.2 -6.6 0A6.6 6.6 0 1 1 6.6 0C6.6 5.2 1.2 8.2 0 12.6Z" fill="#f40000" stroke="#7a0000" stroke-width=".7"/><text y="2.6" text-anchor="middle" style="font:bold 7.4px 'Liberation Sans',sans-serif;fill:#fff">U</text></g>
</svg><!--/MAP-->
<!-- MAP CONTROLS -->
<div class="abs mc" style="left:42px;top:76px;width:104px;height:21.5px"></div>
<div class="abs" style="left:86px;top:76px;width:1px;height:21.5px;background:#eee"></div>
<div class="abs" style="left:54.5px;top:81px;font-size:9.4px;font-weight:bold;color:#111;letter-spacing:.05px">Map</div>
<div class="abs" style="left:98.5px;top:81px;font-size:9.2px;color:#666;letter-spacing:.2px">Satellite</div>
<div class="abs mc" style="left:389.5px;top:76px;width:102.5px;height:54.5px"></div>
<div class="abs" style="left:395.5px;top:81px;font-size:9.5px;color:#333;letter-spacing:-.1px">Legend</div>
<svg class="abs" style="left:394px;top:97px" width="13" height="27" viewBox="0 0 13 27"><circle cx="6.3" cy="6.2" r="5.3" fill="#e00000" stroke="#8a0000" stroke-width=".5"/><circle cx="6.3" cy="19.7" r="5.3" fill="#0000e0" stroke="#00006a" stroke-width=".5"/><text x="6.3" y="7.9" text-anchor="middle" style="font:bold 4.6px 'Liberation Sans',sans-serif;fill:#fff">U</text><text x="6.3" y="21.4" text-anchor="middle" style="font:bold 4.6px 'Liberation Sans',sans-serif;fill:#fff">U</text></svg>
<div class="abs lg" style="left:408.7px;top:100px">Units (Fast Food Burgers): 35</div>
<div class="abs lg" style="left:408.7px;top:113.5px">Units (Fast Food Chicken): 10</div>
<div class="abs mc" style="left:471px;top:142px;width:21px;height:21px"></div>
<svg class="abs" style="left:471px;top:142px" width="21" height="21" viewBox="0 0 21 21"><path d="M6 9.2V6h3.2M11.8 6H15v3.2M15 11.8V15h-3.2M9.2 15H6v-3.2" fill="none" stroke="#666" stroke-width="1.3"/></svg>
<div class="abs mc" style="left:471px;top:191.5px;width:21px;height:21px;border-radius:50%"></div>
<svg class="abs" style="left:471px;top:191.5px" width="21" height="21" viewBox="0 0 21 21"><path d="M8.3 6.9L10.5 4.7L12.7 6.9M8.3 14.1L10.5 16.3L12.7 14.1M6.9 8.3L4.7 10.5L6.9 12.7M14.1 8.3L16.3 10.5L14.1 12.7" fill="none" stroke="#666" stroke-width="1.1"/></svg>
<div class="abs mc" style="left:471px;top:230.5px;width:21px;height:21px"></div>
<svg class="abs" style="left:471px;top:230.5px" width="21" height="21" viewBox="0 0 21 21"><circle cx="10.5" cy="5.8" r="2.3" fill="#f4b400"/><path d="M7.2 9.2Q10.5 7.6 13.8 9.2L13.2 13.2L12.4 13.4L12 17.6H9L8.6 13.4L7.8 13.2Z" fill="#f2a900"/><path d="M9 8.6h3v4h-3z" fill="#e8a000" opacity=".5"/></svg>
<svg class="abs" style="left:41px;top:251px" width="33" height="13" viewBox="0 0 33 13"><g style="font:bold 9.6px 'Liberation Sans',sans-serif;paint-order:stroke;stroke:#fff;stroke-width:1.2px;stroke-opacity:.9;letter-spacing:-.35px"><text x="1" y="9" fill="#4285f4">G</text><text x="8.1" y="9" fill="#ea4335">o</text><text x="13.2" y="9" fill="#fbbc05">o</text><text x="18.3" y="9" fill="#4285f4">g</text><text x="23.4" y="9" fill="#34a853">l</text><text x="25.4" y="9" fill="#ea4335">e</text></g></svg>
<div class="abs" style="left:342.5px;top:257.5px;width:154.5px;height:7.5px;background:rgba(255,255,255,.62)"></div>
<div class="abs at" style="left:344.8px;top:258.2px">Keyboard shortcuts</div>
<div class="abs at" style="left:398.3px;top:258.2px">Map data ©2025 Google, INEGI</div>
<div class="abs at" style="left:478.8px;top:258.2px">Terms</div>
<div class="abs" style="left:393.5px;top:259px;width:.6px;height:5px;background:#bbb"></div>
<div class="abs" style="left:475px;top:259px;width:.6px;height:5px;background:#bbb"></div>

<div class="panel abs" id="p-open" style="left:514px;top:60px;width:482px;height:216.2px"></div>
<div class="ptitle abs" style="left:524.2px;top:60.7px;letter-spacing:-.16px">OPEN UNITS - QUICK ACCESS</div>
<div class="inner abs" id="i-open" style="left:525px;top:71.5px;width:460px;height:193.3px">
<div class="abs" style="left:304px;top:.3px;width:86px;height:19.5px;border:1px solid #ece6dc;border-right:0;border-radius:3px 0 0 3px;background:#fff"></div><div class="abs" style="left:313px;top:5.6px;font-size:7.2px;color:#d2cec6;letter-spacing:-.05px">Quick search</div><div class="abs" style="left:388.5px;top:.3px;width:51.3px;height:19.5px;border-radius:0 2.5px 2.5px 0;background:#3d3c36"></div><svg class="abs" style="left:388.5px;top:0px" width="51" height="20" viewBox="0 0 51 20"><path d="M5.6 9.2h3L7.1 11Z" fill="#fff"/><g fill="none" stroke="#fff" stroke-width="1.25"><circle cx="22.6" cy="9.2" r="2.5"/><path d="M24.5 11.1l2 2" stroke-linecap="round"/><circle cx="40" cy="9.2" r="2.5"/><path d="M41.9 11.1l2 2" stroke-linecap="round"/></g><path d="M38.8 9.2h2.4M40 8v2.4" stroke="#fff" stroke-width=".7"/></svg>
<table style="left:7.8px;top:26px;width:434.2px"><colgroup><col style="width:32.3px"><col style="width:22.9px"><col style="width:76px"><col style="width:49px"><col style="width:70.5px"><col style="width:50.8px"><col style="width:36.5px"><col style="width:61.5px"><col style="width:34.7px"></colgroup>
<tr style="height:25px"><th>Overview</th><th>Unit<br>ID</th><th>Unit Name</th><th>Brand<svg class="fi" width="6.2" height="6.2" viewBox="0 0 10 10"><path d="M.2 .3h9.6L6.2 4.6V10L3.8 8.4V4.6Z" fill="#222"/></svg></th><th>Franchise Entity</th><th>City</th><th>State<svg class="fi" width="6.2" height="6.2" viewBox="0 0 10 10"><path d="M.2 .3h9.6L6.2 4.6V10L3.8 8.4V4.6Z" fill="#222"/></svg></th><th><span style="display:inline-block;text-align:center">Date<br>Opened<svg class="fi" style="margin-left:3.3px;vertical-align:-1.2px" width="5.6" height="7" viewBox="0 0 8 10"><path d="M2 0v8M.3 6.3L2 8.3L3.7 6.3" fill="none" stroke="#444" stroke-width="1.1"/><path d="M5.5 0h1v3.5M5 3.6h2.3M5.3 6h1.8v1.2h-1.8zM7.1 7v2.2H5.2" fill="none" stroke="#444" stroke-width=".8"/></svg></span><svg class="fi" width="6.2" height="6.2" viewBox="0 0 10 10"><path d="M.2 .3h9.6L6.2 4.6V10L3.8 8.4V4.6Z" fill="#222"/></svg></th><th>View<br>Details</th></tr>
<tr class="s" style="height:25px"><td class="g">Overview</td><td>6810</td><td>Lakewood - Kipling<br>Pkwy</td><td>Fast Food<br>Chicken</td><td>--</td><td>Lakewood</td><td>CO</td><td>08/25/2025</td><td class="g">View<br>Details</td></tr>
<tr class="" style="height:24.2px"><td class="g">Overview</td><td>6809</td><td>Wheat Ridge - Kipling</td><td>Fast Food<br>Chicken</td><td>--</td><td>Wheat Ridge</td><td>CO</td><td>05/05/2025</td><td class="g">View<br>Details</td></tr>
<tr class="s" style="height:24.2px"><td class="g">Overview</td><td>9898</td><td>Mesquite Tx - N<br>Galloway</td><td>Fast Food<br>Burgers</td><td>Burger N Galloway,<br>LLC</td><td>Mesquite</td><td>TX</td><td>10/29/2024</td><td class="g">View<br>Details</td></tr>
<tr class="" style="height:24.2px"><td class="g">Overview</td><td>6808</td><td>Denver - E 8th Pl</td><td>Fast Food<br>Chicken</td><td>Chicken Denver</td><td>Denver</td><td>CO</td><td>06/24/2024</td><td class="g">View<br>Details</td></tr>
<tr class="s" style="height:24.2px"><td class="g">Overview</td><td>6807</td><td>Highlands Ranch -<br>University</td><td>Fast Food<br>Chicken</td><td>--</td><td>Highlands<br>Ranch</td><td>CO</td><td>01/08/2024</td><td class="g">View<br>Details</td></tr>
<tr class="" style="height:24.2px"><td class="g">Overview</td><td>1823</td><td>Dallas -Garland Road</td><td>Fast Food<br>Burgers</td><td>Garland Road<br>Burgers, LLC</td><td>Dallas</td><td>TX</td><td>10/03/2023</td><td class="g">View<br>Details</td></tr>
</table>
<div class="abs" style="left:451.5px;top:9px;width:5px;height:28.5px;border-radius:2.5px;background:#8a8a8a"></div><svg class="abs" style="left:450px;top:1px" width="8" height="190" viewBox="0 0 8 190"><path d="M2 4.6h4L4 1.8Z M2 184.7h4L4 187.5Z" fill="#777"/></svg>
</div>
<div class="panel abs" id="p-count" style="left:26px;top:281px;width:238px;height:183.4px"></div>
<div class="panel abs" id="p-act" style="left:270px;top:281px;width:239px;height:183.4px"></div>
<div class="panel abs" id="p-oc" style="left:514px;top:281px;width:238px;height:183.4px"></div>
<div class="panel abs" id="p-sales" style="left:757px;top:281px;width:239px;height:183.4px"></div>

<div class="ptitle abs" style="left:36.8px;top:281.7px;letter-spacing:-.18px">CURRENTLY OPEN UNITS - COUNT</div>
<div class="inner abs" style="left:37px;top:292px;width:216px;height:163.5px"></div>
<svg class="abs" style="left:37px;top:293px" width="216" height="162" viewBox="0 0 216 162"><g stroke="#c4c4c4" stroke-width=".75"><path d="M44 22.1H173"/><path d="M44 44.3H173"/><path d="M44 66.6H173"/><path d="M44 88.8H173"/></g><g stroke="#ebebeb" stroke-width=".6"><path d="M44 33.2H173"/><path d="M44 55.5H173"/><path d="M44 77.7H173"/></g><rect x="56.2" y="27" width="40" height="61.8" fill="#3366cc"/><rect x="120.7" y="84.7" width="40" height="4.1" fill="#3366cc"/><path d="M44 88.9H173" stroke="#aaa" stroke-width=".75"/><g style="font:5px 'Liberation Sans',sans-serif;fill:#444" text-anchor="end"><text x="38.2" y="23.8">30</text><text x="38.2" y="46">25</text><text x="38.2" y="68.3">20</text><text x="38.2" y="90.5">15</text></g><g style="font:5.2px 'Liberation Sans',sans-serif;fill:#222" text-anchor="middle"><text x="76.2" y="96.6">Franchise</text><text x="140.7" y="96.6">Corporate</text></g></svg>
<div class="ptitle abs" style="left:280.7px;top:281.7px;letter-spacing:-.09px">RECENT UNIT ACTIVITY - LAST 90 DAYS</div>
<div class="inner abs" style="left:281px;top:292px;width:216.5px;height:163.5px"><div class="abs" style="left:7.5px;top:14.5px;width:199px;height:48.5px;border:1px solid #ebe4d9;background:#f7f3ee"></div><table style="left:7.5px;top:14.5px;width:199px"><colgroup><col style="width:35.5px"><col style="width:50px"><col style="width:58.8px"><col style="width:54.7px"></colgroup><tr style="height:15.5px"><th style="background:#fff">Unit ID</th><th style="background:#fff">Unit Name</th><th style="background:#fff">Activity Date</th><th style="background:#fff">Description</th></tr></table><div class="abs" style="left:10.8px;top:33.3px;width:192.3px;height:26.3px;border-radius:2.5px;background:#f47d3c;color:#fff;font-size:6.5px;text-align:center;line-height:26.3px;letter-spacing:-.05px">Sorry, there is no data here...</div></div>
<div class="ptitle abs" style="left:524.2px;top:281.7px;letter-spacing:-.26px">OPENINGS &amp; CLOSINGS BY QUARTER</div>
<div class="abs" style="left:736.2px;top:281.2px;width:15.6px;height:12.6px;background:#efefef;border:1px solid #a9adb0;border-radius:1.5px"></div><svg class="abs" style="left:736.2px;top:281.2px" width="15.6" height="12.6" viewBox="0 0 15.6 12.6"><g stroke="#2a2622" stroke-width="1.7" stroke-linecap="round"><path d="M4.3 3.1L6.3 4.9M11.5 3.1L9.5 4.9M4.3 9.3L6.3 7.6M11.5 9.3L9.5 7.6"/></g></svg>
<div class="inner abs" style="left:525px;top:293.5px;width:216px;height:163.5px"><div class="abs" style="left:7.8px;top:7.5px;font-size:5.4px;color:#333;white-space:nowrap;letter-spacing:-.03px">SELECT YEAR:</div><div class="abs" style="left:47.5px;top:1.2px;width:30px;height:19px;border-radius:2px;background:#3d3c36;color:#fff;font-size:6px;font-weight:bold;line-height:19px;padding-left:5.3px;letter-spacing:0">2024</div><svg class="abs" style="left:67.6px;top:9.2px" width="6" height="4" viewBox="0 0 6 4"><path d="M.6 .8h4.4L2.8 3.2Z" fill="#fff"/></svg><table style="left:8.1px;top:38.5px;width:198px"><colgroup><col style="width:21.2px"><col style="width:57.5px"><col style="width:27.5px"><col style="width:46px"><col style="width:45.8px"></colgroup><tr style="height:17.3px"><th></th><th>Quarter</th><th>Total</th><th>Corporate</th><th>Franchise</th></tr><tr class="s" style="height:22.2px"><td><svg width="8" height="8" viewBox="0 0 10 10" style="display:block;margin:0 auto;position:relative;left:-1px"><rect width="10" height="10" rx="2" fill="#222"/><path d="M5 2.2v5.6M2.2 5h5.6" stroke="#fff" stroke-width="1.9"/></svg></td><td>Q1 Openings</td><td>1</td><td>1</td><td>0</td></tr><tr class="" style="height:21.3px"><td><svg width="8" height="8" viewBox="0 0 10 10" style="display:block;margin:0 auto;position:relative;left:-1px"><rect width="10" height="10" rx="2" fill="#222"/><path d="M5 2.2v5.6M2.2 5h5.6" stroke="#fff" stroke-width="1.9"/></svg></td><td>Q2 Openings</td><td>1</td><td>0</td><td>1</td></tr><tr class="s" style="height:21.3px"><td><svg width="8" height="8" viewBox="0 0 10 10" style="display:block;margin:0 auto;position:relative;left:-1px"><rect width="10" height="10" rx="2" fill="#222"/><path d="M5 2.2v5.6M2.2 5h5.6" stroke="#fff" stroke-width="1.9"/></svg></td><td>Q4 Openings</td><td>1</td><td>0</td><td>1</td></tr></table></div>
<div class="abs" style="left:768.2px;top:281.3px;width:139.5px;height:11.6px;background:#fff;border:1px solid #777;border-radius:1px"></div><div class="ptitle abs" style="left:771.2px;top:282.1px;letter-spacing:-.2px">UNIT SALES - TOP 5 GROSS SALES</div><svg class="abs" style="left:899px;top:285px" width="6" height="5" viewBox="0 0 6 5"><path d="M1 1.2L3 3.4L5 1.2" fill="none" stroke="#222" stroke-width="1"/></svg>
<div class="inner abs" style="left:769px;top:294px;width:216px;height:162px"><table style="left:7px;top:12.4px;width:190px"><colgroup><col style="width:10px"><col style="width:38.8px"><col style="width:44.2px"><col style="width:54px"><col style="width:43px"></colgroup><tr style="height:33.5px"><th>#</th><th>Brand</th><th>Current<br>Store<br>Number</th><th>Unit Name</th><th>Total Sales</th></tr><tr class="s" style="height:26px"><td style="font-size:5.6px;color:#444">1</td><td>Fast Food<br>Burgers</td><td>1820</td><td>Colleyville TX -<br>Colleyville Rd</td><td>1,465,000.00</td></tr><tr class="" style="height:24.2px"><td style="font-size:5.6px;color:#444">2</td><td>Fast Food<br>Burgers</td><td>1811</td><td>Dallas TX -<br>Hillcrest Ave</td><td>1,385,000.00</td></tr><tr class="s" style="height:24.2px"><td style="font-size:5.6px;color:#444">3</td><td>Fast Food<br>Burgers</td><td>1810</td><td>Irving TX -<br>Market Pl Blvd</td><td>1,365,000.00</td></tr><tr class="" style="height:24.2px"><td style="font-size:5.6px;color:#444">4</td><td>Fast Food<br>Burgers</td><td>1818</td><td>Fort Worth TX -<br>Gemini Pl</td><td>1,350,000.00</td></tr><tr class="s" style="height:24.2px"><td style="font-size:5.6px;color:#444">5</td><td>Fast Food<br>Burgers</td><td>1806</td><td>Dallas TX -<br>Forest Ln</td><td>1,335,000.00</td></tr></table><div class="abs" style="left:207.5px;top:8.5px;width:4.5px;height:125px;border-radius:2.3px;background:#8a8a8a"></div><svg class="abs" style="left:206.3px;top:-1.2px" width="8" height="160" viewBox="0 0 8 160"><path d="M1.8 6.3h4L3.8 3.5Z M1.8 153.3h4L3.8 156.1Z" fill="#666"/></svg></div>
<!-- FOOTER -->
<div class="abs" style="left:0;top:480.2px;width:1007px;height:1.3px;background:#f4f4f4"></div>
<div class="abs" style="left:23px;top:503.5px;font-size:6.3px;color:#555;white-space:nowrap">© 2025 Franchise Data Experts, LLC - v4.25.09</div>
</body></html>
